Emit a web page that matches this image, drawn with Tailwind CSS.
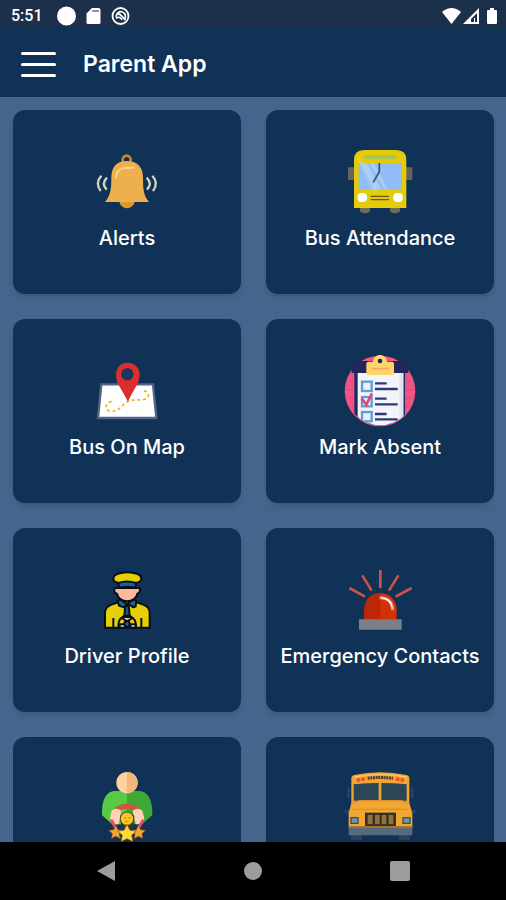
<!DOCTYPE html>
<html lang="en">
<head>
  <meta charset="UTF-8" />
  <meta name="viewport" content="width=device-width, initial-scale=1.0"/>
  <title>Parent App</title>
  <script src="https://cdn.jsdelivr.net/npm/@tailwindcss/browser@4"></script>
</head>
<body class="h-screen flex flex-col overflow-hidden bg-[#46658d] font-['Inter','Roboto',sans-serif] text-white">

  <!-- Status bar -->
  <div class="h-7 shrink-0 flex items-center justify-between bg-[#1c2f4b] pl-[11px] pr-2 pt-1">
    <div class="flex items-center">
      <span class="w-[46px] text-base font-medium font-['Roboto',sans-serif]">5:51</span>
      <svg class="w-[76px] h-6" viewBox="0 0 76 24">
        <circle cx="9.500" cy="12" r="9.500" fill="#fff"/>
        <path d="M35 4h6.500q2 0 2 2v12.500q0 1.500-1.500 1.500H31q-1.500 0-1.500-1.500V9.500z" fill="#fff"/>
        <path d="M35 7h7" stroke="#8d97a6" stroke-width="2"/>
        <circle cx="63.500" cy="12" r="8" fill="none" stroke="#fff" stroke-width="1.800"/>
        <path d="M60 14.500a4.500 4.500 0 1 1 7 1M59.500 10q3-1 5 2l4 4" fill="none" stroke="#fff" stroke-width="1.800"/>
        <path d="M60 14q3-2 5 2" fill="none" stroke="#fff" stroke-width="1.500"/>
      </svg>
    </div>
    <svg class="w-14 h-6" viewBox="0 0 56 24">
      <path d="M0 8Q9.500 0 19 8L9.500 20z" fill="#fff"/>
      <path d="M37 4v16H21z" fill="#fff"/>
      <path d="M35 9v9h-6v-3z" fill="#1c2f4b"/>
      <path d="M32.500 14v4" stroke="#fff"/>
      <path d="M48 4h4v2h2q1 0 1 1v12q0 1-1 1h-8q-1 0-1-1V7q0-1 1-1h2z" fill="#fff"/>
    </svg>
  </div>

  <header class="h-[69px] shrink-0 flex items-center gap-[27px] bg-[#103257] px-[21px] pt-[3px]">
    <button type="button" aria-label="Open menu" class="w-[35px] flex flex-col gap-2">
      <span class="h-[3px] w-full rounded-full bg-white"></span>
      <span class="h-[3px] w-full rounded-full bg-white"></span>
      <span class="h-[3px] w-full rounded-full bg-white"></span>
    </button>
    <h1 class="text-[23px] leading-7 font-semibold">Parent App</h1>
  </header>

  <main class="flex-1 min-h-0 overflow-hidden grid grid-cols-2 auto-rows-[184px] gap-[25px] pl-[13px] pr-3 pt-[13px]">

    <a href="#alerts" class="flex flex-col items-center rounded-xl bg-[#103257] pt-[30px] shadow-md">
      <svg class="w-[90px] h-20" viewBox="0 0 270 240">
        <circle cx="134" cy="59" r="12" fill="none" stroke="#c9882c" stroke-width="8"/>
        <circle cx="135" cy="182" r="23" fill="#d99a2b"/>
        <path d="M134 63c35 0 49 20 49 52 0 38 3 53 18 71H69c15-18 19-33 19-71 0-32 13-52 46-52z" fill="#edb04c"/>
        <path d="M102 112c2-20 12-29 31-29h22" fill="none" stroke="#f7d58f" stroke-width="6" stroke-linecap="round"/>
        <path d="M75 113q-18 18-1 36M58 107q-20 22-2 46M194 113q18 18 1 36M211 107q20 22 2 46" fill="none" stroke="#d5d3bd" stroke-width="7"/>
      </svg>
      <span class="mt-1 text-xl leading-7 font-medium">Alerts</span>
    </a>

    <a href="#attendance" class="flex flex-col items-center rounded-xl bg-[#103257] pt-[30px] shadow-md">
      <svg class="w-[90px] h-20" viewBox="0 0 270 240">
        <path d="M39 82h20v38H39zM212 82h20v38h-20z" fill="#666260"/>
        <path d="M75 198h30v14q-4 8-15 8t-15-8zM165 198h30v14q-4 8-15 8t-15-8z" fill="#6e6c55"/>
        <path d="M57 60q0-30 30-30h97q30 0 30 30v144H57z" fill="#e5ca08"/>
        <rect x="88" y="45" width="96" height="13" rx="6" fill="#a5c857"/>
        <rect x="71" y="69" width="129" height="79" fill="#91bdf6"/>
        <path d="M76 69h20l43 79h-20zM105 69h11l42 79h-11z" fill="#a9cdf5"/>
        <path d="M65 55l10-6 58 112-20-4z" fill="#fff" opacity=".12"/>
        <path d="M133 69v26l-19 33" fill="none" stroke="#38516b" stroke-width="5"/>
        <rect x="68" y="159" width="28" height="27" rx="11" fill="#fff"/>
        <rect x="175" y="159" width="28" height="27" rx="11" fill="#fff"/>
        <path d="M107 169h55M107 179h55" stroke="#635926" stroke-width="4"/>
      </svg>
      <span class="mt-1 text-xl leading-7 font-medium">Bus Attendance</span>
    </a>

    <a href="#map" class="flex flex-col items-center rounded-xl bg-[#103257] pt-[30px] shadow-md">
      <svg class="w-[90px] h-20" viewBox="0 -3 270 240">
        <path d="M58 103h155l10 101H48z" fill="#fff" stroke="#526487" stroke-width="7"/>
        <path d="M89 155c-20 0-22 25-7 28 30 5 34-17 56-29 23-10 58 3 61-17 1-9-6-16-20-14" fill="none" stroke="#e3b51e" stroke-width="5" stroke-dasharray="9 8"/>
        <path fill-rule="evenodd" d="M136 38c23 0 37 15 37 37 0 25-21 47-35 80-16-33-36-55-36-80 0-22 14-37 34-37zm0 17a18 18 0 1 0 0 36 18 18 0 0 0 0-36z" fill="#da302d"/>
        <circle cx="136" cy="73" r="18" fill="#17395b"/>
      </svg>
      <span class="mt-1 text-xl leading-7 font-medium">Bus On Map</span>
    </a>

    <a href="#absent" class="flex flex-col items-center rounded-xl bg-[#103257] pt-[30px] shadow-md">
      <svg class="w-[90px] h-20" viewBox="0 12 270 240">
        <defs>
          <clipPath id="badge"><path d="M0 0h270v135H241a105 105 0 0 1-211 0H0z"/></clipPath>
        </defs>
        <circle cx="135" cy="138" r="106" fill="#f05486"/>
        <path d="M35 135h200M43 110h185M43 160h185M50 185h170" stroke="#d94579" stroke-width="3"/>
        <g clip-path="url(#badge)">
          <path d="M50 60q0-12 12-12h146q12 0 12 12v24h-10v170H58V84h-8z" fill="#22265c"/>
          <path d="M68 84h137v170H68z" fill="#f4f5fb"/>
          <path d="M193 84h12v170h-12z" fill="#e1e5f2"/>
          <g fill="#e6f2fa" stroke="#5d9fd1" stroke-width="7">
            <rect x="81" y="110" width="29" height="28"/>
            <rect x="81" y="156" width="29" height="28"/>
            <rect x="81" y="201" width="29" height="28"/>
          </g>
          <path d="M120 115h35M120 132h68M120 161h35M120 178h68M120 207h35M120 223h68" stroke="#343776" stroke-width="7"/>
          <path d="M80 160l14 19 17-34" fill="none" stroke="#ec407a" stroke-width="8"/>
        </g>
        <path d="M94 56q0-6 6-6h14c1-27 41-27 42 0h15q6 0 6 6v28q0 6-6 6h-71q-6 0-6-6z" fill="#ffd569"/>
        <circle cx="135" cy="48" r="7" fill="#22265c"/>
        <path d="M110 71h52" stroke="#f0a961" stroke-width="5"/>
      </svg>
      <span class="mt-1 text-xl leading-7 font-medium">Mark Absent</span>
    </a>

    <a href="#driver" class="flex flex-col items-center rounded-xl bg-[#103257] pt-[30px] shadow-md">
      <svg class="w-[90px] h-20" viewBox="0 -6 270 240">
        <g stroke="#07101a" stroke-width="6" stroke-linejoin="round">
          <path d="M69 203v-43q0-20 20-26l27-10h40l27 10q20 6 20 26v43z" fill="#e6cf06"/>
          <path d="M103 84c-9-3-9 16 2 17 4 30 57 30 61 0 10-2 11-20 2-17z" fill="#ffb79e"/>
          <path d="M94 56c0-26 84-26 84 0 0 9-9 11-17 13h-51c-8-2-16-4-16-13z" fill="#e6cf06"/>
          <path d="M109 69q26-9 53 0l-2 15q-24-7-49 0z" fill="#17629c"/>
          <path d="M107 122l9-3 18 13 20-13 9 3-2 17-7 3-15-10-13 10-15-5z" fill="#17668a"/>
          <path d="M130 137h10l4 37h-18z" fill="#14577d"/>
          <path d="M94 174v29M178 174v29" fill="none"/>
          <path d="M110 203c-8-48 58-48 51 0" fill="none"/>
          <path d="M119 174l16 10 17-10" fill="#ffbd9f"/>
          <path d="M113 193h16v10h-16zM145 193h16v10h-16z" fill="#e8d9a1"/>
          <circle cx="135" cy="192" r="8" fill="#20669a"/>
        </g>
      </svg>
      <span class="mt-1 text-xl leading-7 font-medium">Driver Profile</span>
    </a>

    <a href="#emergency" class="flex flex-col items-center rounded-xl bg-[#103257] pt-[30px] shadow-md">
      <svg class="w-[90px] h-20" viewBox="0 -6 270 240">
        <path d="M43 84l47 26M82 46l28 46M136 30v55M190 46l-28 46M230 84l-48 26" stroke="#c75549" stroke-width="8"/>
        <path d="M88 179v-30c0-66 97-66 97 0v30z" fill="#d13105"/>
        <path d="M88 179v-30c0-33 24-49 48-49v79z" fill="#bc2707"/>
        <path d="M134 113q38 0 39 38" fill="none" stroke="#ee9a94" stroke-width="9"/>
        <path d="M139 113q28 4 33 29" fill="none" stroke="#fff" stroke-width="4"/>
        <path d="M72 178h128v31H72z" fill="#7b8087"/>
      </svg>
      <span class="mt-1 text-xl leading-7 font-medium">Emergency Contacts</span>
    </a>

    <a href="#rewards" aria-label="Rewards" class="flex flex-col items-center rounded-t-xl bg-[#103257] pt-[30px]">
      <svg class="w-[90px] h-20" viewBox="0 21 270 240">
        <path d="M60 165c0-40 8-72 43-72h65c34 0 43 32 43 72l-31 28H91z" fill="#3ca835"/>
        <path d="M60 165c0-40 8-72 43-72h32v100H91z" fill="#58c944"/>
        <circle cx="135" cy="68" r="32" fill="#ffd0a0"/>
        <path d="M135 36a32 32 0 0 1 0 64z" fill="#f2b779"/>
        <path d="M98 143q37-24 75 0l-6 12q-32-18-62 0z" fill="#cf563b"/>
        <path d="M89 152q15-12 29 0l-8 40q-20 5-26-17zM152 152q15-12 29 0l6 23q-6 22-26 17z" fill="#ffd2b6"/>
        <path d="M87 179l15 26M184 179l-15 26" stroke="#e94c62" stroke-width="9"/>
        <path d="M114 168q22-20 43 0l-4 35h-35z" fill="#343436"/>
        <circle cx="135" cy="176" r="20" fill="#f8ca23" stroke="#554026" stroke-width="3"/>
        <path d="M126 174h7M139 174h7M130 184h10" stroke="#d88c18" stroke-width="4"/>
        <path d="M101 196l7 13 15 2-11 10 3 15-14-7-13 7 3-15-11-10 15-2zM169 196l7 13 15 2-11 10 3 15-14-7-13 7 3-15-11-10 15-2z" fill="#f3a82d" stroke="#684724" stroke-width="2"/>
        <path d="M135 193l9 18 19 2-14 13 4 19-18-9-18 9 4-19-14-13 19-2z" fill="#ffd934" stroke="#72562a" stroke-width="2"/>
      </svg>
    </a>

    <a href="#school-bus" aria-label="School bus" class="flex flex-col items-center rounded-t-xl bg-[#103257] pt-[30px]">
      <svg class="w-[90px] h-20" viewBox="0 21 270 240">
        <path d="M37 81h8v32h-8zM228 81h8v32h-8zM29 151h13v9H29zM231 151h13v9h-13zM48 225h33v15H48zM192 225h33v15h-33z" fill="#2a435c"/>
        <path d="M49 55q0-8 9-10 78-16 156 0 9 2 9 10v75l9 28v47H41v-47l8-28z" fill="#f0a631"/>
        <path d="M57 51q78-16 158 0" fill="none" stroke="#ffc45e" stroke-width="4"/>
        <path d="M98 55q37-5 76 0" fill="none" stroke="#4d402f" stroke-width="9" stroke-dasharray="6 2"/>
        <circle cx="70" cy="60" r="6" fill="#eb5136"/>
        <circle cx="84" cy="58" r="6" fill="#eb5136"/>
        <circle cx="188" cy="58" r="6" fill="#eb5136"/>
        <circle cx="202" cy="60" r="6" fill="#eb5136"/>
        <path d="M56 73q38-4 75-4v53H56zM139 69q38 0 76 4v49h-76z" fill="#2e4756"/>
        <path d="M49 130l25-8h124l25 8M52 148h166" fill="none" stroke="#dc902d" stroke-width="4"/>
        <path d="M90 158h93v40H90z" fill="#332f27"/>
        <path d="M98 165h15v28H98zM120 165h14v28h-14zM140 165h14v28h-14zM161 165h14v28h-14z" fill="#94703a"/>
        <path d="M48 173h21v17H48zM204 173h21v17h-21z" fill="#6797aa" stroke="#414b4c" stroke-width="4"/>
        <path d="M41 203h191v23H41z" fill="#536b7c"/>
        <path d="M41 201h191" stroke="#98622e" stroke-width="4"/>
      </svg>
    </a>
  </main>

  <!-- System navigation -->
  <nav class="h-[58px] shrink-0 grid grid-cols-3 items-center bg-black px-8">
    <button type="button" aria-label="Back" class="flex justify-center">
      <svg class="w-5 h-5" viewBox="0 0 20 20"><path d="M19 0v20L1 10z" fill="#9d9d9d"/></svg>
    </button>
    <button type="button" aria-label="Home" class="flex justify-center">
      <span class="size-[18px] rounded-full bg-[#9d9d9d]"></span>
    </button>
    <button type="button" aria-label="Recent apps" class="flex justify-center">
      <span class="size-5 rounded-xs bg-[#9d9d9d]"></span>
    </button>
  </nav>
</body>
</html>
